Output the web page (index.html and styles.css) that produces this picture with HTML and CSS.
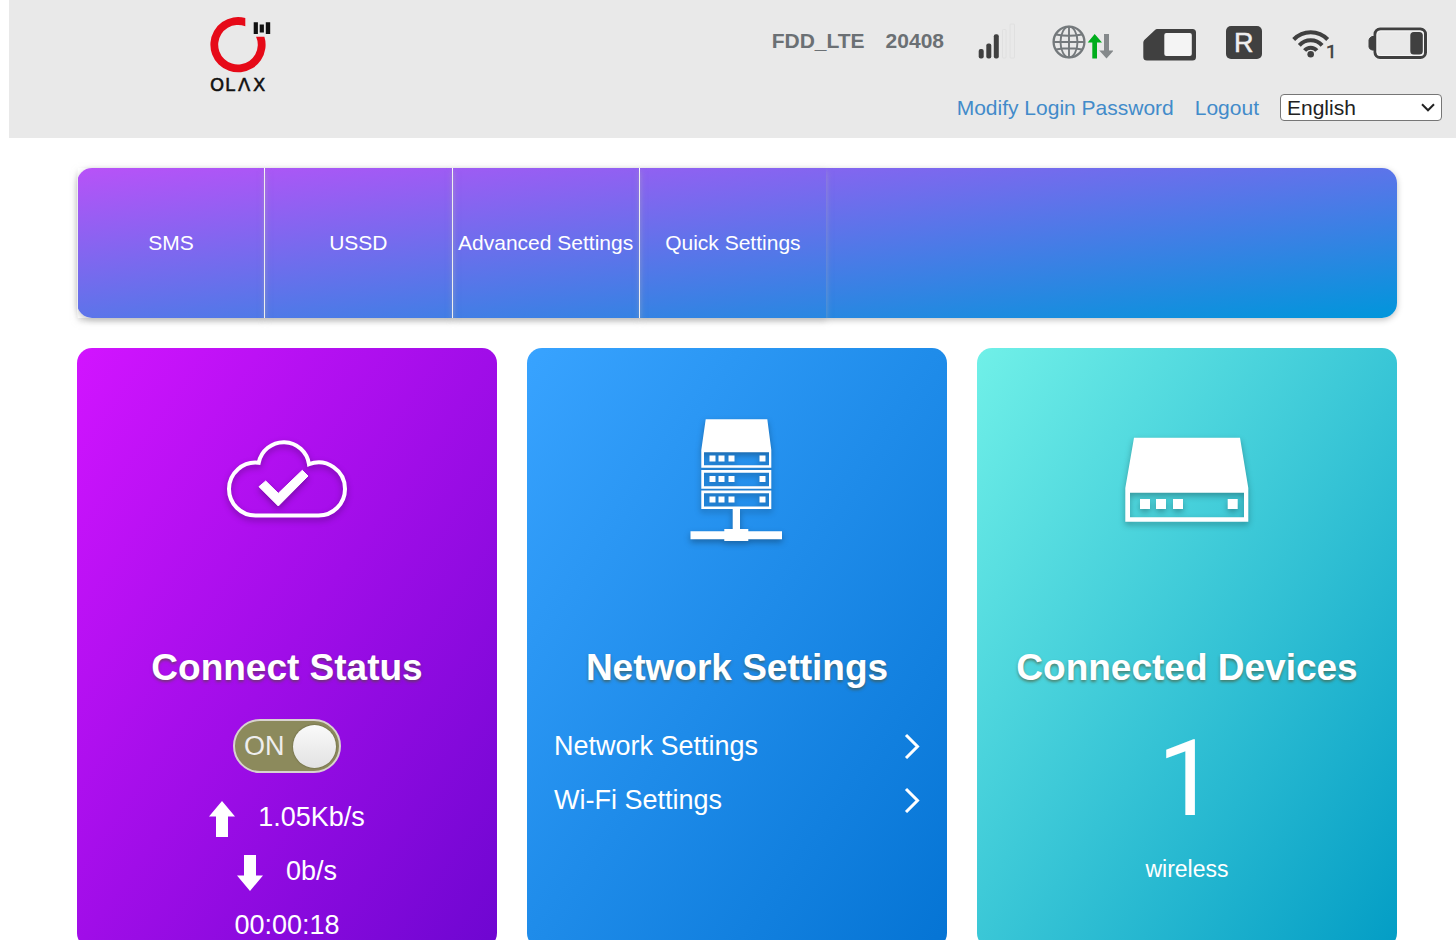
FILE: index.html
```html
<!DOCTYPE html>
<html lang="en">
<head>
<meta charset="utf-8">
<title>OLAX</title>
<link rel="stylesheet" href="styles.css">
</head>
<body>
<header class="topbar">
  <a class="logo" href="#" aria-label="OLAX home">
    <svg width="62" height="78" viewBox="0 0 62 78">
      <path d="M35.300 1.100A27.600 27.600 0 1 0 54.400 19.700H46.100A19.800 19.800 0 1 1 35.300 9.300Z" fill="#e60a18"/>
      <path d="M43.700 5.300h4.200V17h-4.200zM49.700 7.500h4.200V15.500h-4.200zM55.800 5.300h4.400V17h-4.400z" fill="#111"/>
      <text class="wordmark" x="0 15 28 43" y="74">OLΛX</text>
    </svg>
  </a>
  <div class="tools">
    <div class="status">
      <div class="carrier"><span>FDD_LTE</span><span>20408</span></div>
      <svg width="48" height="40" viewBox="0 0 48 40">
        <g fill="#404040"><rect x="4.700" y="26" width="5" height="9.500" rx="2"/><rect x="12.300" y="20.500" width="5" height="15" rx="2"/><rect x="19.800" y="11.300" width="5" height="24.200" rx="2"/></g>
        <g fill="none" stroke="#e0e0e0"><rect x="28.500" y="6.500" width="3.500" height="28.500" rx="1"/><rect x="36" y="1" width="4.500" height="34" rx="1"/></g>
      </svg>
      <svg width="61" height="40" viewBox="0 0 61 40">
        <g fill="none" stroke="#74797c" stroke-width="1.900"><circle cx="17" cy="19" r="15.400" stroke-width="2.300"/><ellipse cx="17" cy="19" rx="8.500" ry="15.400"/><path d="M17 3.400v31.200M1.400 19h31.200M4 11.500q13 2.500 26 0M4 26.500q13-2.500 26 0"/></g>
        <path d="M35.700 19.500L42.700 11l7.300 8.500h-5v16h-4.700v-16z" fill="#00ad1c"/>
        <path d="M47.300 27.500H52V11h5v16.500h4.700l-7.200 8z" fill="#85898b"/>
      </svg>
      <svg width="53" height="40" viewBox="0 0 53 40">
        <path d="M14 6h35.500q3.500 0 3.500 3.500V34q0 3.500-3.500 3.500H4Q.3 37.500.3 34V19.500q0-1.500 1-2.500L12 7q1-1 2-1z" fill="#404040"/>
        <rect x="21.300" y="10" width="27.500" height="23" rx="2" fill="#f4f4f4"/>
      </svg>
      <svg width="36" height="40" viewBox="0 0 36 40">
        <rect y="3" width="36" height="33" rx="5" fill="#404040"/>
        <text x="8" y="29" font-size="27" fill="#eee" stroke="#eee" stroke-width=".5">R</text>
      </svg>
      <svg width="44" height="40" viewBox="0 0 44 40">
        <g fill="none" stroke="#404040" stroke-width="4"><path d="M1.700 16.500A23.500 23.500 0 0 1 35.700 16.500M7.300 22.300a15.500 15.500 0 0 1 22.800 0M12.600 27.500a8 8 0 0 1 12.200 0"/></g>
        <circle cx="18.700" cy="31.200" r="3.300" fill="#404040"/>
        <text class="badge" x="34" y="35">1</text>
      </svg>
      <svg width="62" height="40" viewBox="0 0 62 40">
        <rect x="9" y="6" width="50.500" height="28.500" rx="6" fill="none" stroke="#f3f3f3" stroke-width="4.500"/>
        <path d="M9 13.500H6Q3 15 3 17v7q0 2 3 3h3z" fill="#404040" stroke="#404040"/>
        <rect x="9" y="6" width="50.500" height="28.500" rx="5" fill="#e9e9e9" stroke="#404040" stroke-width="3"/>
        <rect x="11" y="8" width="46.500" height="24.500" rx="3.500" fill="none" stroke="#f6f6f6"/>
        <rect x="44.300" y="9" width="12.500" height="22.500" rx="3.500" fill="#404040"/>
      </svg>
    </div>
    <div class="account">
      <a href="#">Modify Login Password</a>
      <a href="#">Logout</a>
      <div class="language">
        <select aria-label="Language"><option>English</option></select>
        <svg class="caret" width="14" height="9" viewBox="0 0 14 9"><path d="M1 1.300l6 6 6-6" fill="none" stroke="#222" stroke-width="2"/></svg>
      </div>
    </div>
  </div>
</header>
<main class="page">
  <nav class="menu">
    <ul class="menu-list">
      <li><a href="#">SMS</a></li>
      <li><a href="#">USSD</a></li>
      <li><a href="#">Advanced Settings</a></li>
      <li><a href="#">Quick Settings</a></li>
    </ul>
  </nav>
  <div class="cards">
    <section class="card card-connect">
      <svg class="card-icon" width="150" height="150" viewBox="0 0 150 150">
        <path d="M43.500 110.500A26.500 26.500 0 0 1 17 84A26.500 26.500 0 0 1 46.700 57.800A25.500 25.500 0 0 1 97 59.200A26.500 26.500 0 0 1 133 84A26.500 26.500 0 0 1 106.500 110.500Z" fill="none" stroke="#fff" stroke-width="4"/>
        <path d="M47 81.700l6.700-5.700 12.600 12.300 24-23 5.700 5.700-29.700 30z" fill="#fff" stroke="#fff"/>
      </svg>
      <h2>Connect Status</h2>
      <label class="switch"><input type="checkbox" checked aria-label="Connection"><span>ON</span><span class="knob"></span></label>
      <div class="stats">
        <div class="stat"><svg width="26" height="40" viewBox="0 0 26 40"><path d="M13 4l13 15.500h-7V40H7V19.500H0z" fill="#fff"/></svg><span>1.05Kb/s</span></div>
        <div class="stat"><svg width="26" height="40" viewBox="0 0 26 40"><path d="M13 40l13-15.500h-7V4H7v20.500H0z" fill="#fff"/></svg><span>0b/s</span></div>
        <div class="stat"><span>00:00:18</span></div>
      </div>
    </section>
    <section class="card card-network">
      <svg class="card-icon" width="150" height="150" viewBox="0 0 150 150">
        <g fill="#fff" fill-rule="evenodd">
          <path d="M43.700 14.300h61.600l4 30.700v17.700h-70V45zM42 47.300v13h65v-13z"/>
          <path d="M39.300 65h70v18.700h-70zM42 67.700v13.600h65V67.700z"/>
          <path d="M39.300 85.500h70V104h-70zM42 88.200v13.300h65V88.200z"/>
          <path d="M47.500 50.500h6v6h-6zM56.500 50.500h6v6h-6zM66.500 50.500h6v6h-6zM97.500 50.500h6v6h-6zM47.500 71h6v6h-6zM56.500 71h6v6h-6zM66.500 71h6v6h-6zM97.500 71h6v6h-6zM47.500 91.500h6v6h-6zM56.500 91.500h6v6h-6zM66.500 91.500h6v6h-6zM97.500 91.500h6v6h-6z"/>
          <path d="M70.700 104H78v20h8.300v2.300H120v8H86.300v1.700h-24v-1.700H28.500v-8h33.800V124h8.400z"/>
        </g>
      </svg>
      <h2>Network Settings</h2>
      <div class="links">
        <a href="#"><span>Network Settings</span><svg width="16" height="26" viewBox="0 0 16 26"><path d="M2 2l11.500 11.500L2 25" fill="none" stroke="#fff" stroke-width="3"/></svg></a>
        <a href="#"><span>Wi-Fi Settings</span><svg width="16" height="26" viewBox="0 0 16 26"><path d="M2 2l11.500 11.500L2 25" fill="none" stroke="#fff" stroke-width="3"/></svg></a>
      </div>
    </section>
    <section class="card card-devices">
      <svg class="card-icon" width="150" height="150" viewBox="0 0 150 150">
        <g fill="#fff" fill-rule="evenodd">
          <path d="M22 32.700h106l8.300 50.300v33.700h-123V83zM18 87.700v24.600h114V87.700z"/>
          <path d="M28 94h10v10H28zM44 94h10v10H44zM61 94h10v10H61zM115.700 94h10v10h-10z"/>
        </g>
      </svg>
      <h2>Connected Devices</h2>
      <div class="count">1</div>
      <div class="count-label">wireless</div>
    </section>
  </div>
</main>
</body>
</html>
```
FILE: styles.css
```css
* { box-sizing: border-box; }
html { scrollbar-width: none; }
body {
  margin: 0;
  padding-left: 9px;
  background: #fff;
  font-family: "Liberation Sans", Arial, sans-serif;
  font-size: 21px;
  line-height: 30px;
}
svg { display: block; flex: none; }
a { color: inherit; text-decoration: none; }

.topbar {
  display: flex;
  justify-content: space-between;
  align-items: flex-start;
  padding: 17px 14px 17px 201px;
  background: #e9e9e9;
}
.wordmark {
  font-family: "DejaVu Sans", sans-serif;
  font-size: 18px;
  fill: #111;
  stroke: #111;
  stroke-width: .5px;
}
.badge {
  fill: #404040;
  stroke: #404040;
  stroke-width: .5px;
  font-family: Roboto, sans-serif;
  font-size: 19px;
}
.tools {
  display: flex;
  flex-direction: column;
  align-items: flex-end;
  gap: 31px;
  padding-top: 6px;
}
.status {
  display: flex;
  align-items: center;
  gap: 30px;
  padding-right: 14px;
}
.carrier {
  display: flex;
  gap: 21px;
  padding-bottom: 4px;
  color: #6b7074;
  font-weight: bold;
}
.account {
  display: flex;
  align-items: center;
  gap: 21px;
  height: 27px;
  color: #428bca;
}
.language {
  position: relative;
  width: 162px;
  height: 27px;
}
.language select {
  appearance: none;
  display: block;
  width: 100%;
  height: 100%;
  padding: 0 24px 0 6px;
  border: 1px solid #767676;
  border-radius: 4px;
  background: #fff;
  color: #222;
  font: inherit;
  line-height: 25px;
}
.caret {
  position: absolute;
  top: 9px;
  right: 7px;
  pointer-events: none;
}

.page { padding: 30px 59px 0 68px; }
.menu {
  border-radius: 15px;
  background: linear-gradient(to bottom right, #b852f8, #0096db);
  box-shadow: 0 2px 6px rgba(0, 0, 0, .25);
}
.menu-list {
  display: flex;
  width: 749px;
  margin: 0;
  padding: 0;
  list-style: none;
  color: #fff;
  border-left: 1px solid #fff;
}
.menu-list li {
  flex: 1 0 0;
  box-shadow: 0 3px 6px rgba(180, 180, 180, .5);
}
.menu-list li:not(:last-child) { border-right: 1px solid #fff; }
.menu-list a {
  display: flex;
  align-items: center;
  justify-content: center;
  height: 150px;
  white-space: nowrap;
}

.cards {
  display: grid;
  grid-template-columns: repeat(3, 1fr);
  gap: 30px;
  margin-top: 30px;
}
.card {
  display: flex;
  flex-direction: column;
  align-items: center;
  min-height: 600px;
  padding-top: 57px;
  border-radius: 15px;
  color: #fff;
  font-size: 27px;
}
.card-connect { background: linear-gradient(to bottom right, #d214ff, #6e06d1); }
.card-network { background: linear-gradient(to bottom right, #38a3ff, #0574d4); }
.card-devices { background: linear-gradient(to bottom right, #70f0e8, #039dc5); }
.card-icon { filter: drop-shadow(0 3px 3px rgba(0, 0, 0, .3)); }
.card h2 {
  margin: 89px 0 0;
  font-size: 37px;
  line-height: 48px;
  white-space: nowrap;
  text-shadow: 0 2px 3px rgba(80, 80, 40, .6);
}
.switch {
  display: flex;
  align-items: center;
  justify-content: space-between;
  width: 108px;
  height: 54px;
  margin-top: 27px;
  padding: 0 3px 0 9px;
  border: 2px solid #d8d2cf;
  border-radius: 27px;
  background: #8c8a5c;
  color: #eee;
}
.switch input {
  position: absolute;
  width: 104px;
  height: 50px;
  margin: 0 0 0 -9px;
  opacity: 0;
}
.knob {
  width: 43px;
  height: 43px;
  border-radius: 50%;
  background: linear-gradient(#fafafa, #e2e2e2);
  box-shadow: 0 0 2px rgba(0, 0, 0, .4);
}
.stats, .links {
  display: flex;
  flex-direction: column;
  gap: 14px;
  line-height: 40px;
}
.stats { align-items: center; margin-top: 24px; }
.stat { display: flex; gap: 23px; }
.links { align-self: stretch; margin-top: 34px; padding: 0 27px; }
.links a { display: flex; align-items: center; justify-content: space-between; }
.count {
  margin-top: 38px;
  font-family: Roboto, "Liberation Sans", sans-serif;
  font-size: 105px;
  line-height: 100px;
}
.count-label { margin-top: 24px; font-size: 23px; line-height: 30px; }
```
